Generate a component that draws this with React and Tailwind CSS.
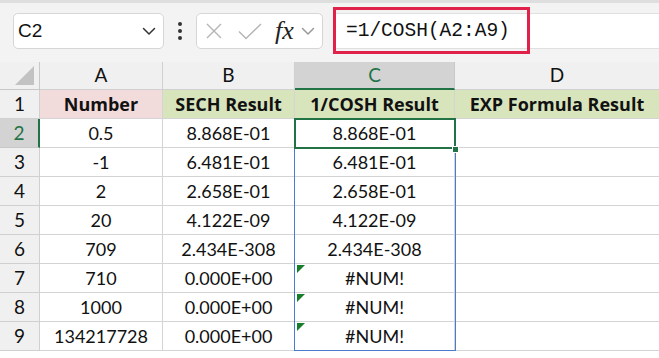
import React from "react";

const rows = [
  ["0.5", "8.868E-01", "8.868E-01"],
  ["-1", "6.481E-01", "6.481E-01"],
  ["2", "2.658E-01", "2.658E-01"],
  ["20", "4.122E-09", "4.122E-09"],
  ["709", "2.434E-308", "2.434E-308"],
  ["710", "0.000E+00", "#NUM!"],
  ["1000", "0.000E+00", "#NUM!"],
  ["134217728", "0.000E+00", "#NUM!"],
];

const font = { fontFamily: "Lato, 'Open Sans', sans-serif" };
const headFont = { fontFamily: "'Open Sans', Lato, sans-serif" };

function Chevron({ className }) {
  return (
    <svg className={className} width="14" height="9" viewBox="0 0 14 9" fill="none">
      <path d="M1.5 1.5 L7 7 L12.5 1.5" stroke="currentColor" strokeWidth="1.5" strokeLinecap="round" strokeLinejoin="round" />
    </svg>
  );
}

export default function App() {
  return (
    <div className="w-[659px] h-[358px] overflow-hidden bg-white relative" style={font}>
      {/* Toolbar */}
      <div className="h-[62px] bg-[#f3f3f3] border-t-[3px] border-[#dedede] flex items-start relative">
        <div className="mt-[10px] ml-[13px] w-[151px] h-[36px] bg-white border border-[#d6d6d6] rounded-[5px] flex items-center justify-between pl-[4px] pr-[7px]">
          <span className="text-[19px] text-[#111]" style={{ fontFamily: "'Liberation Sans', Arial, sans-serif" }}>C2</span>
          <Chevron className="text-[#333]" />
        </div>
        <div className="w-[32px] h-[46px] flex flex-col items-center justify-center gap-[3px] mt-[5px]">
          <div className="w-[4px] h-[4px] rounded-full bg-[#333]" />
          <div className="w-[4px] h-[4px] rounded-full bg-[#333]" />
          <div className="w-[4px] h-[4px] rounded-full bg-[#333]" />
        </div>
        <div className="mt-[10px] w-[127px] h-[36px] bg-white border border-[#d6d6d6] rounded-[5px] flex items-center pl-[8px]">
          <svg width="16" height="16" viewBox="0 0 16 16" className="ml-[1px]">
            <path d="M1 1 L15 15 M15 1 L1 15" stroke="#b4b4b4" strokeWidth="1.4" />
          </svg>
          <svg width="24" height="17" viewBox="0 0 24 17" className="ml-[16px]">
            <path d="M1 8.5 L8 15.5 L23 1" stroke="#b4b4b4" strokeWidth="1.4" fill="none" />
          </svg>
          <span className="ml-[13px] text-[26px] italic text-[#222] leading-none" style={{ fontFamily: "'Liberation Serif', 'Times New Roman', serif" }}>fx</span>
          <Chevron className="ml-[7px] text-[#999]" />
        </div>
        <div className="mt-[10px] ml-[10px] flex-1 h-[36px] bg-white border-y border-[#e0e0e0] relative">
          <div className="absolute left-0 top-[-7px] w-[197px] h-[47px] border-[3px] border-[#e0224a]" />
          <span className="absolute left-[13px] top-[5px] text-[19.5px] text-[#111] leading-[24px]" style={{ fontFamily: "'Liberation Mono', 'DejaVu Sans Mono', monospace" }}>
            =1/COSH(A2:A9)
          </span>
        </div>
      </div>

      {/* Grid */}
      <div className="relative">
        <div className="grid grid-cols-[40px_123px_132px_160px_204px] text-[#111]">
          {/* Column header row */}
          <div className="h-[28px] bg-[#f0f0f0] border-r border-b border-[#c8c8c8] relative">
            <div
              className="absolute right-[5px] bottom-[4px] w-[19px] h-[19px] bg-[#c2c2c2]"
              style={{ clipPath: "polygon(100% 0, 100% 100%, 0 100%)" }}
            />
          </div>
          {["A", "B"].map((c) => (
            <div key={c} className="h-[28px] bg-[#f0f0f0] border-r border-b border-[#d0d0d0] flex items-center justify-center text-[19px]">
              {c}
            </div>
          ))}
          <div className="h-[28px] bg-[#d3d3d3] border-r border-[#c8c8c8] border-b-2 border-b-[#217346] flex items-center justify-center text-[19px] text-[#217346]">
            C
          </div>
          <div className="h-[28px] bg-[#f0f0f0] border-b border-[#d0d0d0] flex items-center justify-center text-[19px]">
            D
          </div>

          {/* Row 1 */}
          <div className="h-[29px] bg-[#f0f0f0] border-r border-b border-[#d0d0d0] flex items-center justify-center text-[19px]">1</div>
          <div className="h-[29px] bg-[#f2dcdb] border-r border-b border-[#d4d4d4] flex items-center justify-center text-[18px] font-bold" style={headFont}>Number</div>
          <div className="h-[29px] bg-[#d8e4bc] border-r border-b border-[#d4d4d4] flex items-center justify-center text-[18px] font-bold" style={headFont}>SECH Result</div>
          <div className="h-[29px] bg-[#d8e4bc] border-r border-b border-[#d4d4d4] flex items-center justify-center text-[18px] font-bold" style={headFont}>1/COSH Result</div>
          <div className="h-[29px] bg-[#d8e4bc] border-b border-[#d4d4d4] flex items-center justify-center text-[18px] font-bold" style={headFont}>EXP Formula Result</div>

          {rows.map((r, i) => (
            <React.Fragment key={i}>
              <div
                className={
                  i === 0
                    ? "h-[29px] bg-[#d3d3d3] border-b border-[#c8c8c8] border-r-2 border-r-[#217346] flex items-center justify-center text-[19px] text-[#217346]"
                    : "h-[29px] bg-[#f0f0f0] border-r border-b border-[#d0d0d0] flex items-center justify-center text-[19px]"
                }
              >
                {i + 2}
              </div>
              <div className="h-[29px] border-r border-b border-[#d4d4d4] flex items-center justify-center text-[18px]">{r[0]}</div>
              <div className="h-[29px] border-r border-b border-[#d4d4d4] flex items-center justify-center text-[18px]">{r[1]}</div>
              <div className="h-[29px] border-r border-b border-[#d4d4d4] flex items-center justify-center text-[18px] relative">
                {i >= 5 && (
                  <div
                    className="absolute left-[2px] top-[1px] w-[8px] h-[8px] bg-[#167d2a]"
                    style={{ clipPath: "polygon(0 0, 100% 0, 0 100%)" }}
                  />
                )}
                {r[2]}
              </div>
              <div className="h-[29px] border-b border-[#d4d4d4]" />
            </React.Fragment>
          ))}
        </div>

        {/* Range selection overlay */}
        <div className="absolute left-[294px] top-[56px] w-[162px] h-[233px] border-[1.5px] border-[#4a7bd0] pointer-events-none" />
        <div className="absolute left-[294px] top-[56px] w-[162px] h-[31px] border-2 border-[#217346] pointer-events-none" />
        <div className="absolute left-[452px] top-[84px] w-[7px] h-[7px] bg-[#217346] border border-white pointer-events-none" />
      </div>
    </div>
  );
}
